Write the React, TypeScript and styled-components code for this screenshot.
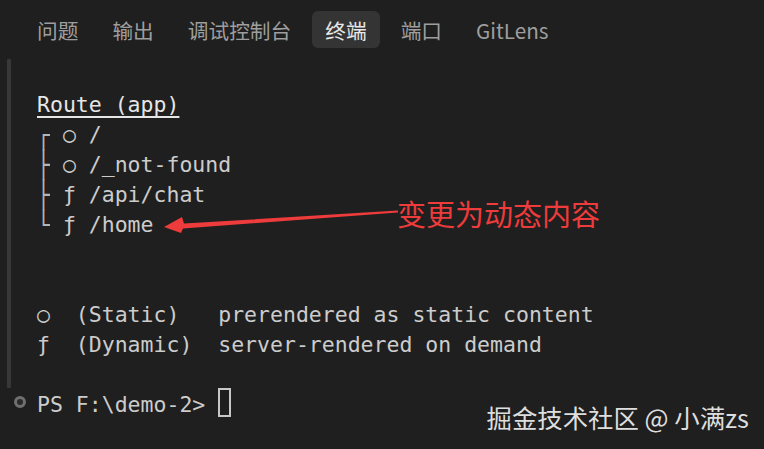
import React from "react";
import styled, { createGlobalStyle } from "styled-components";

const Global = createGlobalStyle`
  html, body { margin: 0; padding: 0; background: #1f1f1f; }
  body { width: 764px; height: 449px; overflow: hidden; }
`;

const Screen = styled.div`
  position: relative;
  width: 764px;
  height: 449px;
  overflow: hidden;
  background: #1f1f1f;
  display: flex;
  flex-direction: column;
`;

const TabBar = styled.nav`
  height: 59px;
  flex: none;
  display: flex;
  align-items: center;
  gap: 8px;
  padding-left: 24px;
`;

const Tab = styled.div<{ $active?: boolean }>`
  height: 37px;
  padding: 0 13px;
  border-radius: 6px;
  display: flex;
  align-items: center;
  font-family: "Noto Sans CJK SC", "Noto Sans", sans-serif;
  font-size: 20.7px;
  color: ${(p) => (p.$active ? "#e8e8e8" : "#9e9e9e")};
  background: ${(p) => (p.$active ? "#343434" : "transparent")};
`;

const Body = styled.main`
  flex: 1;
  display: flex;
`;

const Gutter = styled.aside`
  width: 37px;
  flex: none;
  display: flex;
  flex-direction: column;
`;

const Rail = styled.div`
  width: 4px;
  height: 329px;
  margin-left: 7px;
  background: #383838;
  border-radius: 1px;
`;

const Decoration = styled.div`
  width: 12px;
  height: 12px;
  box-sizing: border-box;
  margin: 8px 0 0 14px;
  border-radius: 50%;
  border: 3px solid #6f6f6f;
  background: #2a2a2a;
`;

const Output = styled.section`
  padding-top: 31px;
  display: flex;
  flex-direction: column;
  font-family: "DejaVu Sans Mono", "Liberation Mono", monospace;
  font-size: 21.5px;
  color: #cccccc;
`;

const Line = styled.div`
  height: 30px;
  line-height: 30px;
  white-space: pre;
`;

const Heading = styled.span`
  color: #e6e6e6;
  text-decoration: underline;
  text-decoration-thickness: 2px;
  text-underline-offset: 4px;
`;

const TreeMark = styled.span`
  display: inline-block;
  color: #b4b4b4;
  transform: scaleY(1.22);
`;

const Cursor = styled.span`
  display: inline-block;
  width: 13px;
  height: 29px;
  box-sizing: border-box;
  border: 2px solid #c8c8c8;
  vertical-align: top;
  margin-top: -2px;
`;

const ArrowLayer = styled.svg`
  position: absolute;
  left: 0;
  top: 0;
  width: 764px;
  height: 449px;
  pointer-events: none;
`;

const Label = styled.div`
  position: absolute;
  left: 397px;
  top: 198px;
  font-family: "Noto Sans CJK SC", "Noto Sans", sans-serif;
  font-size: 29px;
  line-height: 31px;
  color: #ee3b3b;
  white-space: nowrap;
`;

const Watermark = styled.div`
  position: absolute;
  right: 15px;
  top: 403px;
  font-family: "Noto Sans CJK SC", "Noto Sans", sans-serif;
  font-size: 25.4px;
  line-height: 28px;
  color: #dedede;
  white-space: nowrap;
`;

const tabs = ["问题", "输出", "调试控制台", "终端", "端口", "GitLens"];

const routes: [string, string, string][] = [
  ["┌", "○", "/"],
  ["├", "○", "/_not-found"],
  ["├", "ƒ", "/api/chat"],
  ["└", "ƒ", "/home"],
];

export default function App() {
  return (
    <Screen>
      <Global />
      <TabBar>
        {tabs.map((t) => (
          <Tab key={t} $active={t === "终端"}>
            {t}
          </Tab>
        ))}
      </TabBar>
      <Body>
        <Gutter>
          <Rail />
          <Decoration />
        </Gutter>
        <Output>
          <Line>
            <Heading>Route (app)</Heading>
          </Line>
          {routes.map(([mark, sym, path]) => (
            <Line key={path}>
              <TreeMark>{mark}</TreeMark>
              {` ${sym} ${path}`}
            </Line>
          ))}
          <Line> </Line>
          <Line> </Line>
          <Line>{"○  (Static)   prerendered as static content"}</Line>
          <Line>{"ƒ  (Dynamic)  server-rendered on demand"}</Line>
          <Line> </Line>
          <Line>
            {"PS F:\\demo-2> "}
            <Cursor />
          </Line>
        </Output>
      </Body>
      <ArrowLayer viewBox="0 0 764 449">
        <polygon
          points="398,210.6 398,212.4 183,228.6 181,233 164,227 182,217 184,223.6"
          fill="#ee3b3b"
        />
      </ArrowLayer>
      <Label>变更为动态内容</Label>
      <Watermark>掘金技术社区 @ 小满zs</Watermark>
    </Screen>
  );
}
